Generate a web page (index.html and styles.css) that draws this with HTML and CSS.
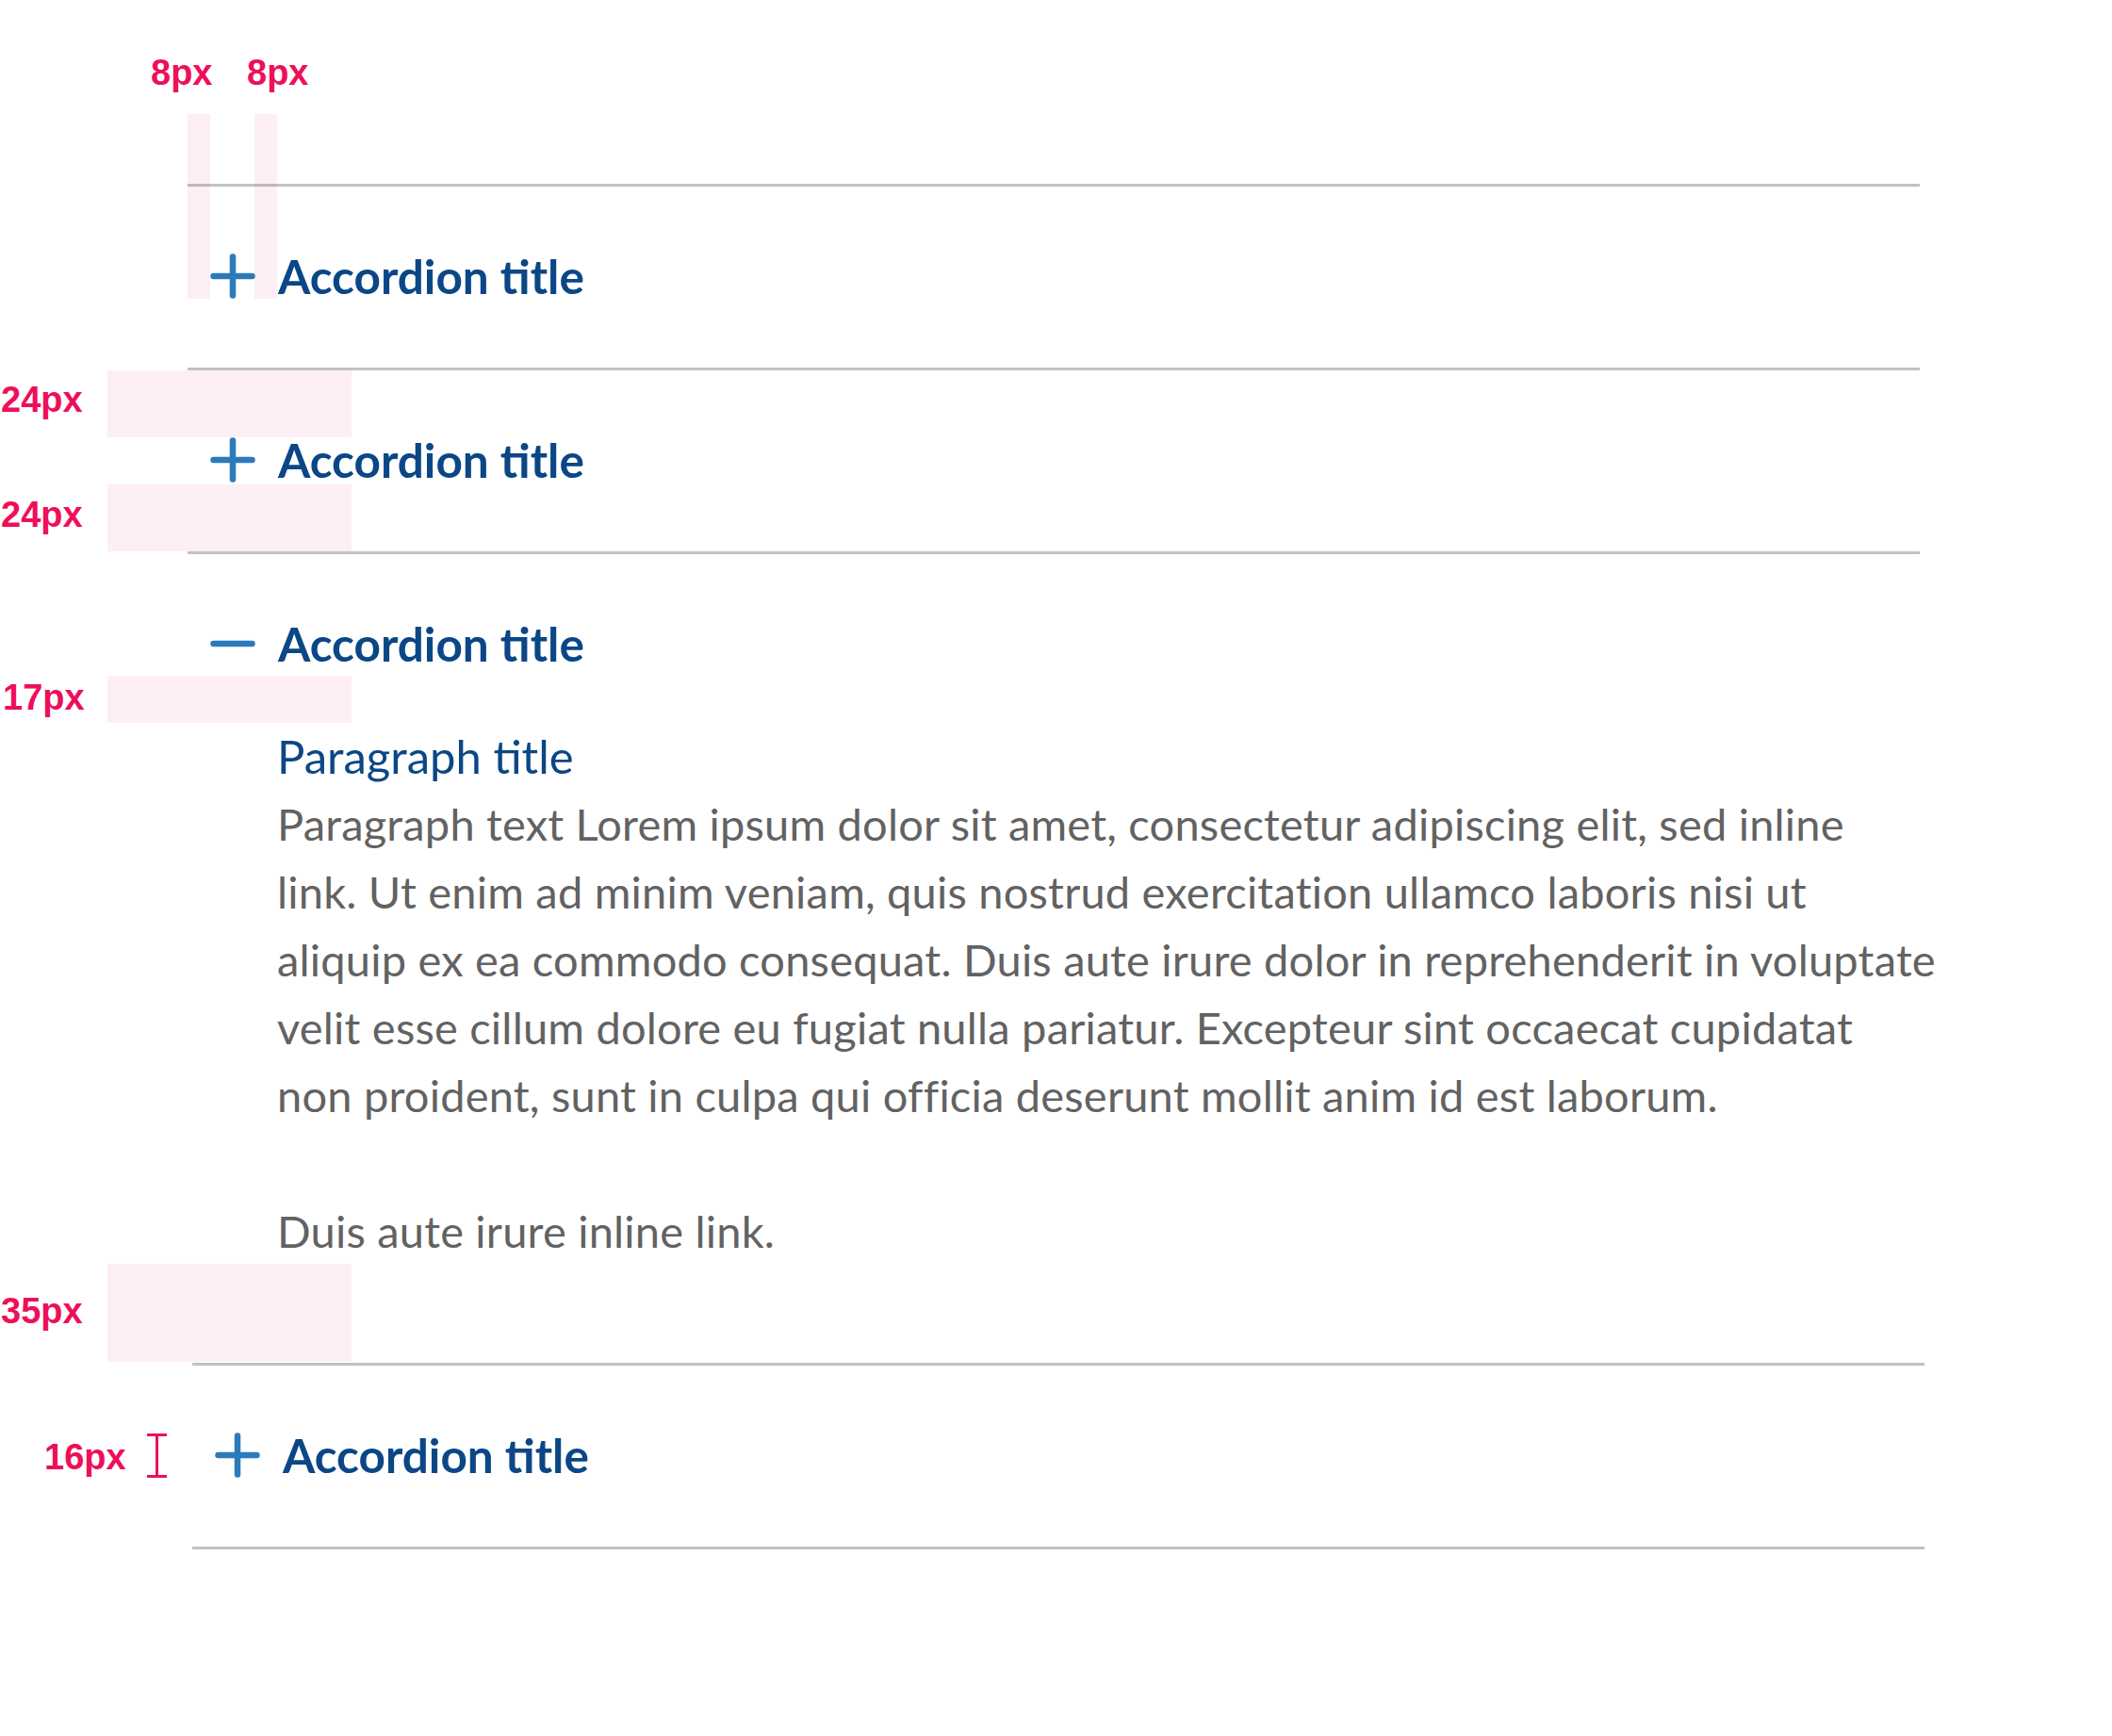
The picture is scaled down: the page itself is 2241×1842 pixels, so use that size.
FILE: index.html
```html
<!DOCTYPE html>
<html lang="en">
<head>
<meta charset="utf-8">
<title>Accordion spec</title>
<link rel="stylesheet" href="styles.css">
</head>
<body>
<div class="sheet">
  <div class="accordion">
    <div class="acc-item">
      <div class="acc-header">
        <svg class="acc-icon" viewBox="0 0 48 48" width="48" height="48"><path d="M3.5 24H44.5M24 3.5V44.5"/></svg>
        <span class="acc-title">Accordion title</span>
      </div>
    </div>
    <div class="acc-item">
      <div class="acc-header">
        <svg class="acc-icon" viewBox="0 0 48 48" width="48" height="48"><path d="M3.5 24H44.5M24 3.5V44.5"/></svg>
        <span class="acc-title">Accordion title</span>
      </div>
    </div>
    <div class="acc-item is-open">
      <div class="acc-header">
        <svg class="acc-icon" viewBox="0 0 48 48" width="48" height="48"><path d="M3.5 24H44.5"/></svg>
        <span class="acc-title">Accordion title</span>
      </div>
      <div class="acc-panel">
        <div class="panel-body">
          <h3 class="panel-title">Paragraph title</h3>
          <p class="panel-text">Paragraph text Lorem ipsum dolor sit amet, consectetur adipiscing elit, sed inline<br>link. Ut enim ad minim veniam, quis nostrud exercitation ullamco laboris nisi ut<br>aliquip ex ea commodo consequat. Duis aute irure dolor in reprehenderit in voluptate<br>velit esse cillum dolore eu fugiat nulla pariatur. Excepteur sint occaecat cupidatat<br>non proident, sunt in culpa qui officia deserunt mollit anim id est laborum.</p>
          <p class="panel-text">Duis aute irure inline link.</p>
        </div>
      </div>
    </div>
  </div>

  <div class="accordion accordion--shifted">
    <div class="acc-item">
      <div class="acc-header">
        <svg class="acc-icon" viewBox="0 0 48 48" width="48" height="48"><path d="M3.5 24H44.5M24 3.5V44.5"/></svg>
        <span class="acc-title">Accordion title</span>
      </div>
    </div>
  </div>

  <!-- redline annotations -->
  <span class="note note--8a">8px</span>
  <span class="note note--8b">8px</span>
  <span class="strip strip--a"></span>
  <span class="strip strip--b"></span>

  <span class="note note--24a">24px</span>
  <span class="block block--24a"></span>
  <span class="note note--24b">24px</span>
  <span class="block block--24b"></span>

  <span class="note note--17">17px</span>
  <span class="block block--17"></span>

  <span class="note note--35">35px</span>
  <span class="block block--35"></span>

  <span class="note note--16">16px</span>
  <span class="ibeam"></span>
</div>
</body>
</html>
```

FILE: styles.css
```css
html, body {
  margin: 0;
  padding: 0;
  background: #ffffff;
}

.sheet {
  position: relative;
  width: 2241px;
  min-height: 1842px;
  padding: 195px 0 0 199px;
  box-sizing: border-box;
}

/* ---------- Accordion ---------- */
.accordion {
  width: 1838px;
}

.accordion--shifted {
  margin-left: 5px;
  border-bottom: 3px solid #c2c2c2;
}

.acc-item {
  border-top: 3px solid #c2c2c2;
}

.acc-header {
  display: flex;
  align-items: center;
  gap: 24px;
  padding: 70px 0 72px 24px;
}

.acc-icon {
  flex: none;
  display: block;
  fill: none;
  stroke: #2b7bbb;
  stroke-width: 6.5;
  stroke-linecap: round;
}

.acc-title {
  font-family: Lato, "Open Sans", sans-serif;
  font-weight: 700;
  font-size: 49.5px;
  line-height: 50px;
  color: #0b4786;
}

.is-open .acc-header {
  padding-bottom: 0;
}

.acc-panel {
  padding: 58px 0 104px 95px;
}

.panel-body {
  width: 1800px;
}

.panel-title {
  margin: 0;
  font-family: Lato, "Open Sans", sans-serif;
  font-weight: 400;
  font-size: 49px;
  line-height: 72px;
  color: #0b4786;
}

.panel-text {
  margin: 0;
  font-family: Lato, "Open Sans", sans-serif;
  font-weight: 400;
  font-size: 47px;
  letter-spacing: 0.2px;
  line-height: 72px;
  color: #626262;
  white-space: nowrap;
}

.panel-text + .panel-text {
  margin-top: 72px;
}

/* ---------- Redline annotations ---------- */
.note {
  position: absolute;
  font-family: "Liberation Sans", Arial, sans-serif;
  font-weight: 700;
  font-size: 38px;
  line-height: 44px;
  color: #ee0f5a;
  white-space: nowrap;
}

.note--8a { left: 160px; top: 55px; }
.note--8b { left: 262px; top: 55px; }
.note--24a { left: 1px; top: 402px; }
.note--24b { left: 1px; top: 524px; }
.note--17 { left: 3px; top: 718px; }
.note--35 { left: 1px; top: 1369px; }
.note--16 { left: 47px; top: 1524px; }

.strip,
.block {
  position: absolute;
  background: rgba(240, 20, 90, 0.065);
}

.strip { top: 121px; height: 196px; width: 24px; }
.strip--a { left: 199px; }
.strip--b { left: 270px; }

.block { left: 114px; width: 259px; }
.block--24a { top: 393px; height: 71px; }
.block--24b { top: 514px; height: 71px; }
.block--17 { top: 717px; height: 50px; }
.block--35 { top: 1341px; height: 104px; }

.ibeam {
  position: absolute;
  left: 156px;
  top: 1521px;
  width: 21px;
  height: 47px;
  box-sizing: border-box;
  border-top: 3px solid #ee0f5a;
  border-bottom: 3px solid #ee0f5a;
}

.ibeam::before {
  content: "";
  position: absolute;
  left: 9px;
  top: 0;
  bottom: 0;
  width: 3px;
  background: #ee0f5a;
}
```
